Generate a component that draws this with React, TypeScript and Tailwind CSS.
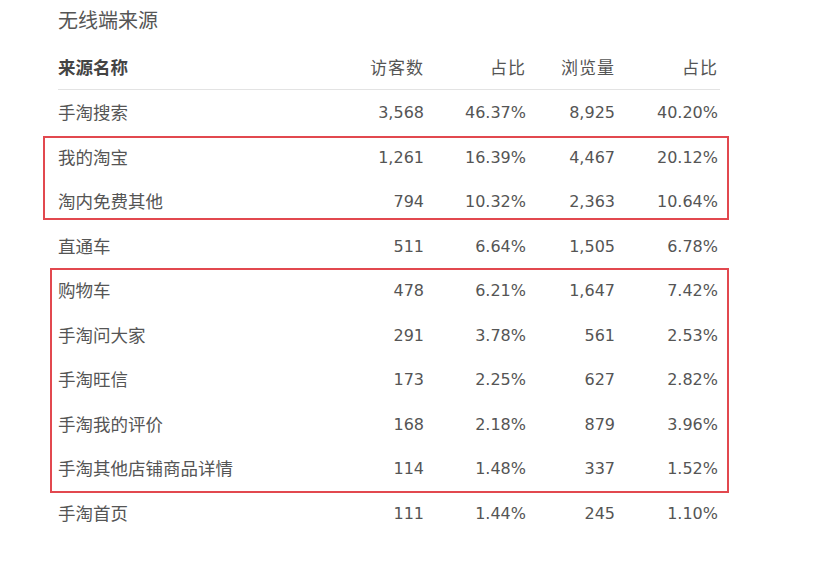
import React from 'react'

type Row = [string, string, string, string, string]

const rows: Row[] = [
    ['手淘搜索', '3,568', '46.37%', '8,925', '40.20%'],
    ['我的淘宝', '1,261', '16.39%', '4,467', '20.12%'],
    ['淘内免费其他', '794', '10.32%', '2,363', '10.64%'],
    ['直通车', '511', '6.64%', '1,505', '6.78%'],
    ['购物车', '478', '6.21%', '1,647', '7.42%'],
    ['手淘问大家', '291', '3.78%', '561', '2.53%'],
    ['手淘旺信', '173', '2.25%', '627', '2.82%'],
    ['手淘我的评价', '168', '2.18%', '879', '3.96%'],
    ['手淘其他店铺商品详情', '114', '1.48%', '337', '1.52%'],
    ['手淘首页', '111', '1.44%', '245', '1.10%'],
]

const grid = 'grid grid-cols-[1fr_104px_102px_89px_103px] items-center pr-[2px]'

const DataRow = ({ row }: { row: Row }) => (
    <div className={`${grid} h-[44.5px] text-[#555]`}>
        <span className="text-[17.5px]">{row[0]}</span>
        {row.slice(1).map((v, i) => (
            <span key={i} className="text-right text-[16px]">{v}</span>
        ))}
    </div>
)

// hand-drawn red annotation around a group of rows
const Marked = ({ items, box }: { items: Row[]; box: string }) => (
    <div className="relative">
        {items.map(r => <DataRow key={r[0]} row={r} />)}
        <span className={`pointer-events-none absolute border-[2.5px] border-[#e2484f] ${box}`} />
    </div>
)

export default function App() {
    return (
        <div
            className="min-h-[563px] w-[822px] bg-white pl-[58px] pt-[7px]"
            style={{ fontFamily: '"DejaVu Sans", "Noto Sans CJK SC", sans-serif' }}
        >
            <h2 className="text-[20px] leading-[28px] text-[#555]">无线端来源</h2>
            <div className="w-[662px]">
                <div className={`${grid} mt-[15px] h-[40px] border-b border-[#e3e3e3] pb-[2px] text-[#555]`}>
                    <span className="text-[17.5px] font-bold text-[#444]">来源名称</span>
                    <span className="text-right text-[17px] tracking-[1px]">访客数</span>
                    <span className="text-right text-[17px] tracking-[1px]">占比</span>
                    <span className="text-right text-[17px] tracking-[1px]">浏览量</span>
                    <span className="text-right text-[17px] tracking-[1px]">占比</span>
                </div>
                <div className="pt-[1px]">
                    <DataRow row={rows[0]} />
                    <Marked items={rows.slice(1, 3)} box="-left-[15px] -right-[9px] top-0 bottom-[5px]" />
                    <DataRow row={rows[3]} />
                    <Marked items={rows.slice(4, 9)} box="-left-[8px] -right-[9px] -top-[1px] -bottom-[1px]" />
                    <DataRow row={rows[9]} />
                </div>
            </div>
        </div>
    )
}
